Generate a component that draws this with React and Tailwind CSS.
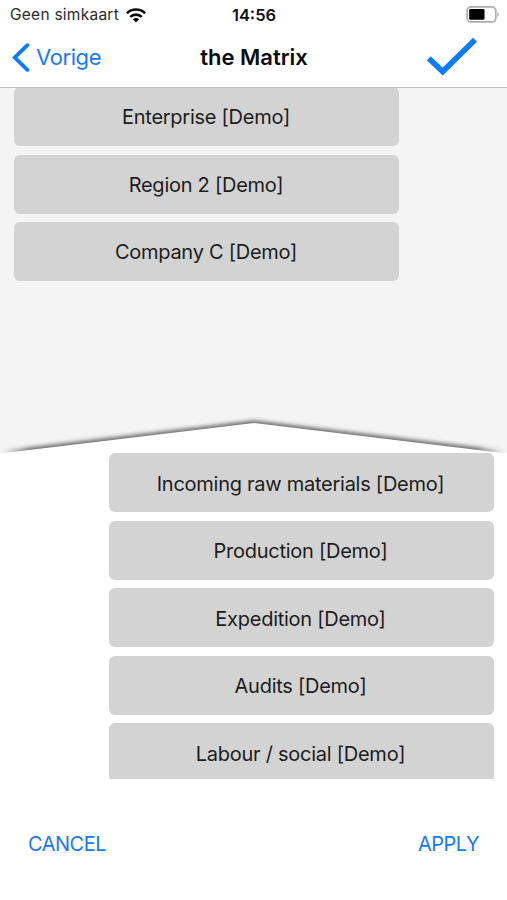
const upperItems = ["Enterprise [Demo]", "Region 2 [Demo]", "Company C [Demo]"];

const lowerItems = [
    "Incoming raw materials [Demo]",
    "Production [Demo]",
    "Expedition [Demo]",
    "Audits [Demo]",
    "Labour / social [Demo]",
];

function WifiIcon() {
    return (
        <svg width="20" height="15" viewBox="0 0 20 15" fill="none" stroke="#0b0b0b" strokeWidth="2.6">
            <path d="M0.9 5.2a13.1 13.1 0 0 1 18.2 0" />
            <path d="M4.2 8.9a8.5 8.5 0 0 1 11.6 0" />
            <path d="M6.9 11.3a4.6 4.6 0 0 1 6.2 0L10 14.6Z" fill="#0b0b0b" stroke="none" />
        </svg>
    );
}

function BatteryIcon() {
    return (
        <svg width="33" height="17" viewBox="0 0 33 17" fill="none">
            <rect x="1.2" y="0.9" width="28.6" height="15" rx="3.8" stroke="#adadad" strokeWidth="1.7" />
            <rect x="3.2" y="3" width="15.3" height="10.8" rx="1.2" fill="#000" />
            <path d="M31.4 6.2c1.8.7 1.8 4 0 4.7Z" fill="#adadad" />
        </svg>
    );
}

// Peak between the two lists, with a shadow cast on the upper one
function Divider() {
    return (
        <svg className="block w-full shrink-0" width="507" height="45" viewBox="0 0 507 45" fill="none">
            <defs>
                <filter id="shade" x="-5%" y="-50%" width="110%" height="200%">
                    <feGaussianBlur stdDeviation="2.9" />
                </filter>
                <linearGradient id="fade" gradientUnits="userSpaceOnUse" x1="0" y1="0" x2="507" y2="0">
                    <stop offset="0.005" stopOpacity="0" />
                    <stop offset="0.06" stopOpacity="0.78" />
                    <stop offset="0.94" stopOpacity="0.78" />
                    <stop offset="0.995" stopOpacity="0" />
                </linearGradient>
            </defs>
            <path d="M0 46L254 15.5L507 46" stroke="url(#fade)" strokeWidth="4.5" filter="url(#shade)" />
            <path d="M0 45.5L254 15L507 45.5Z" fill="#fff" />
        </svg>
    );
}

function ItemButton({ label }) {
    return (
        <button className="flex h-[59px] w-[385px] shrink-0 items-center justify-center rounded-[6px] bg-[#d3d3d3] pt-[1.5px] pr-px text-[20px] leading-6 tracking-[-0.26px] whitespace-nowrap text-[#1c1c1c]">
            {label}
        </button>
    );
}

export default function App() {
    return (
        <div className="flex h-[900px] w-[507px] flex-col overflow-hidden bg-white font-['Inter','Liberation_Sans',sans-serif]">
            <header className="relative z-10 flex h-[88px] shrink-0 flex-col border-b border-[#bdbdbd]">
                {/* Status bar */}
                <div className="grid h-[30px] grid-cols-3 items-center px-2">
                    <div className="flex items-center gap-[7px] pl-0.5">
                        <span className="text-[15.5px] tracking-[0.25px] whitespace-nowrap text-[#2b2b2b]">Geen simkaart</span>
                        <WifiIcon />
                    </div>
                    <span className="pl-px text-center text-[16.5px] font-semibold text-[#111]">14:56</span>
                    <div className="flex justify-end pb-px">
                        <BatteryIcon />
                    </div>
                </div>
                {/* Navigation bar */}
                <div className="grid flex-1 grid-cols-3 items-center px-3 pb-[3px]">
                    <button className="flex items-center gap-[6px] text-[22px] leading-7 tracking-[-0.4px] text-[#1779f5]">
                        <svg width="18" height="29" viewBox="0 0 18 29" fill="none">
                            <path d="M15.4 2.2L2.8 14.5L15.4 26.8" stroke="#087bff" strokeWidth="3.8" strokeLinecap="round" />
                        </svg>
                        Vorige
                    </button>
                    <h1 className="pl-px text-center text-[22px] leading-7 font-semibold whitespace-nowrap text-[#0c0c0c]">the Matrix</h1>
                    <button className="flex justify-end pr-[18px]">
                        <svg width="50" height="40" viewBox="0 0 50 40" fill="none">
                            <path d="M1.8 21.4L15.7 34.6L48 2.8" stroke="#087bff" strokeWidth="5.6" />
                        </svg>
                    </button>
                </div>
            </header>

            <section className="flex h-[365px] shrink-0 flex-col justify-between bg-[#f4f4f4]">
                <div className="-mt-px flex flex-col gap-[8.5px] pl-[14px]">
                    {upperItems.map((label) => (
                        <ItemButton key={label} label={label} />
                    ))}
                </div>
                <Divider />
            </section>

            <section className="flex h-[326px] shrink-0 flex-col items-end gap-[8.5px] overflow-hidden pt-[0.25px] pr-[13.5px]">
                {lowerItems.map((label) => (
                    <ItemButton key={label} label={label} />
                ))}
            </section>

            <footer className="flex flex-1 items-center justify-between px-7 pt-[9px] text-[20px] tracking-[-0.5px] text-[#1779f5]">
                <button>CANCEL</button>
                <button>APPLY</button>
            </footer>
        </div>
    );
}
